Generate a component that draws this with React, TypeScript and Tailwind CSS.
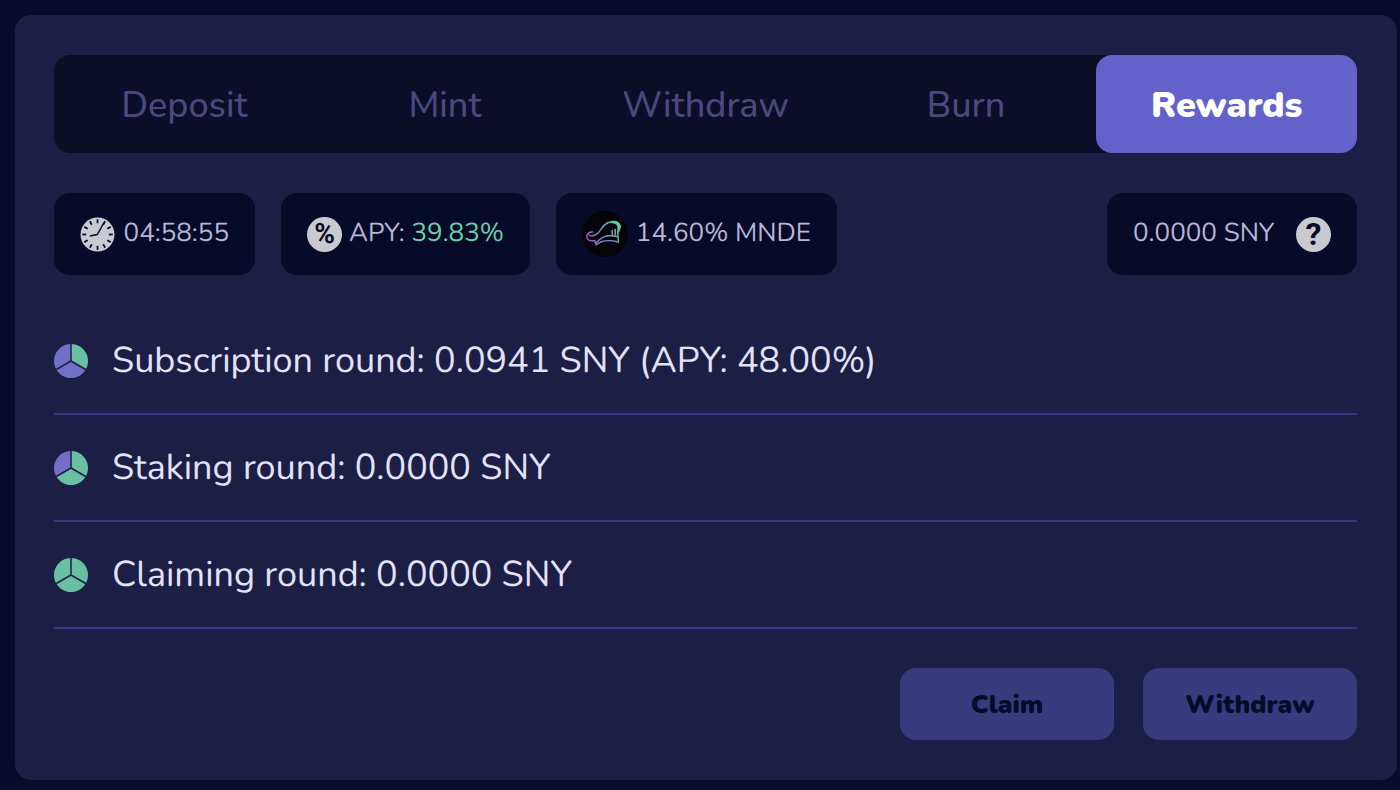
import { useState, type ReactNode } from "react";
import clsx from "clsx";

const TABS = ["Deposit", "Mint", "Withdraw", "Burn", "Rewards"];

const GREEN = "#68bfa2";
const PURPLE = "#7270c6";

const ROUNDS = [
  { label: "Subscription round: 0.0941 SNY (APY: 48.00%)", filled: 1 },
  { label: "Staking round: 0.0000 SNY", filled: 2 },
  { label: "Claiming round: 0.0000 SNY", filled: 3 },
];

// The circle is cut in thirds, filled clockwise from the top
const SLICES = [
  "M17 17V0A17 17 0 0 1 31.72 25.5Z",
  "M17 17L31.72 25.5A17 17 0 0 1 2.28 25.5Z",
  "M17 17L2.28 25.5A17 17 0 0 1 17 0Z",
];

function RoundIcon({ filled }: { filled: number }) {
  return (
    <svg viewBox="0 0 34 34" className="size-[34px] shrink-0" aria-hidden="true">
      {SLICES.map((d, i) => (
        <path key={d} d={d} fill={i < filled ? GREEN : PURPLE} />
      ))}
      <path d="M17 0V17L2.28 25.5M17 17L31.72 25.5" fill="none" stroke="#1c1e45" strokeWidth="1.5" />
    </svg>
  );
}

function ClockIcon() {
  return (
    <svg viewBox="0 0 34 34" className="size-[35px] shrink-0" aria-hidden="true">
      <circle cx="17" cy="17" r="16.5" fill="#c9c9d0" />
      {[0, 30, 60, 90, 120, 150, 180, 210, 240, 270, 300, 330].map((angle) => (
        <path key={angle} d="M17 2.2V6" stroke="#070b28" strokeWidth="1.7" transform={`rotate(${angle} 17 17)`} />
      ))}
      <path d="M9.5 18.5L16.8 17L23.3 5.5" fill="none" stroke="#070b28" strokeWidth="1.4" />
    </svg>
  );
}

function MarinadeIcon() {
  return (
    <svg viewBox="0 0 46 46" className="size-[46px] shrink-0" fill="none" aria-hidden="true">
      <defs>
        <linearGradient id="mnde" x1="5" y1="34" x2="38" y2="12" gradientUnits="userSpaceOnUse">
          <stop offset="0" stopColor="#a94bc4" />
          <stop offset="0.45" stopColor="#7887c8" />
          <stop offset="1" stopColor="#65cda5" />
        </linearGradient>
      </defs>
      <circle cx="23" cy="23" r="23" fill="#040409" />
      <g stroke="url(#mnde)" strokeWidth="1.5" strokeLinecap="round" strokeLinejoin="round">
        <path d="M10.5 21C6 20.5 3.8 24.5 5.2 27.5C6.5 30 10 30 12.7 29.5L14 33.8L18.7 31C24 29 30 29.3 36.5 31L35.9 25.5" />
        <path d="M6.8 24C9.5 26 14 24.5 17 21C19.5 18 20.5 14.5 26 11.5" />
        <path d="M14.5 31.5C18 27.5 22 25 27 24.7C30 24.5 33 25 35.9 25.7M30.2 23.5V19.5M33.2 23.8V18.5" />
        <path
          d="M25 12C31 8.5 38 10 38.5 15.5C38.7 18.5 36 20.5 35.9 25.2C34.6 20.5 36.3 18.5 35.8 15.8C35 12 30 11.2 25 12Z"
          fill="#65cda5"
          strokeWidth="0.8"
        />
      </g>
    </svg>
  );
}

function Chip({ children, className }: { children: ReactNode; className?: string }) {
  return (
    <div
      className={clsx(
        "flex h-[82px] items-center justify-between whitespace-nowrap rounded-2xl bg-[#070b28] px-[26px] text-[26px] leading-8 text-[#b7b5d8]",
        className
      )}
    >
      {children}
    </div>
  );
}

export default function App() {
  const [tab, setTab] = useState("Rewards");

  return (
    <div className="min-h-screen bg-[#080b29] pt-[15px] pr-[3px] pb-2.5 pl-[15px] font-[Nunito,Lato,sans-serif] [text-rendering:geometricPrecision]">
      <main className="rounded-2xl bg-[#1c1e45] py-10 pr-10 pl-[39px]">
        <nav className="grid h-[98px] grid-cols-5 rounded-2xl bg-[#0c0d26]">
          {TABS.map((name) => (
            <button
              key={name}
              type="button"
              onClick={() => setTab(name)}
              className={clsx(
                "rounded-2xl pt-1 text-4xl",
                tab === name ? "bg-[#6362cb] font-black text-white" : "font-medium text-[#4b487f]"
              )}
            >
              {name}
            </button>
          ))}
        </nav>

        <div className="mt-10 flex gap-[26px]">
          <Chip className="w-[201px]">
            <ClockIcon />
            <span>04:58:55</span>
          </Chip>
          <Chip className="w-[249px]">
            <span className="flex size-[35px] shrink-0 items-center justify-center rounded-full bg-[#c9c9d0] font-[Roboto,sans-serif] text-[28px] font-bold text-[#070b28]">
              %
            </span>
            <span>
              APY: <span className="text-[#6fcfab]">39.83%</span>
            </span>
          </Chip>
          <Chip className="w-[281px]">
            <MarinadeIcon />
            <span>14.60% MNDE</span>
          </Chip>
          <Chip className="ml-auto w-[250px]">
            <span>0.0000 SNY</span>
            <button
              type="button"
              aria-label="About rewards"
              className="flex size-[35px] shrink-0 items-center justify-center rounded-full bg-[#c9c9d0] font-[Roboto,sans-serif] text-[32px] font-bold text-[#070b28]"
            >
              ?
            </button>
          </Chip>
        </div>

        <ul className="mt-[33px]">
          {ROUNDS.map((round) => (
            <li
              key={round.label}
              className="flex h-[107px] items-center gap-6 border-b-2 border-[#36397b] text-4xl text-[#e3e2f6]"
            >
              <RoundIcon filled={round.filled} />
              <span>{round.label}</span>
            </li>
          ))}
        </ul>

        <div className="mt-[39px] flex justify-end gap-[29px]">
          {["Claim", "Withdraw"].map((action) => (
            <button
              key={action}
              type="button"
              className="h-[72px] w-[214px] rounded-2xl bg-[#393a7e] text-[26px] font-black text-[#070b28]"
            >
              {action}
            </button>
          ))}
        </div>
      </main>
    </div>
  );
}
